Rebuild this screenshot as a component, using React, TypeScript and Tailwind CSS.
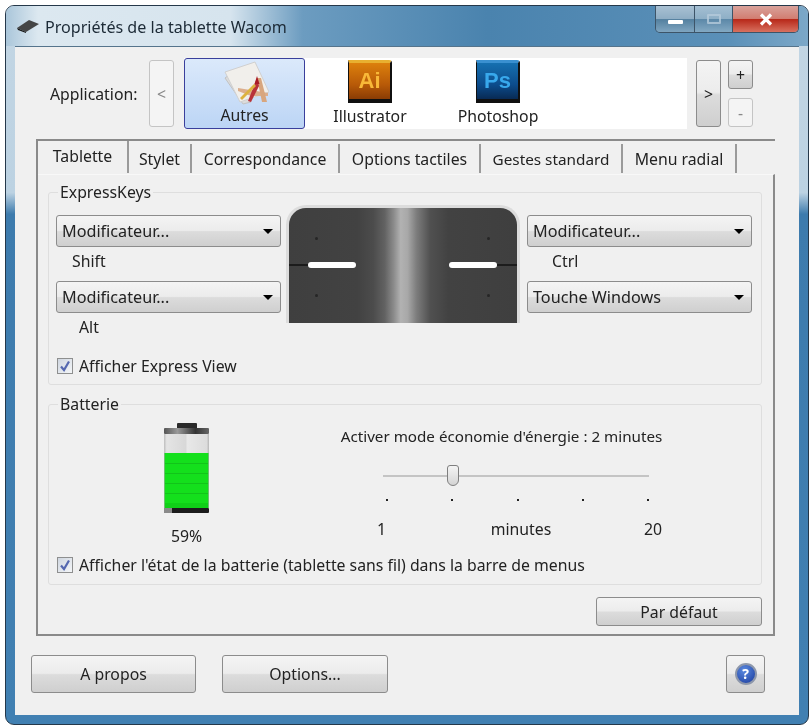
import React from 'react';

const btn =
  'flex items-center justify-center rounded-[3px] border border-[#8c8c8c] bg-[linear-gradient(#f4f4f4_0%,#ececec_48%,#dcdcdc_52%,#cfcfcf_100%)] text-[#222]';
const btnOff =
  'flex items-center justify-center rounded-[3px] border border-[#c4c4c4] bg-[#f4f4f4] text-[#888]';

function Dropdown({ label }: { label: string }) {
  return (
    <div className={`${btn} h-[32px] !justify-between pl-[5px] pr-[6px] text-[16.2px]`}>
      <span>{label}</span>
      <span className="mr-[1px] h-0 w-0 border-x-[5px] border-t-[5px] border-x-transparent border-t-black" />
    </div>
  );
}

function Check({ label }: { label: string }) {
  return (
    <div className="flex h-[16px] items-center gap-[6px] pl-[8px]">
      <div className="flex h-[16px] w-[16px] items-center justify-center border border-[#8e8f8f] bg-[linear-gradient(135deg,#cfd6e0,#f4f6f8)]">
        <svg viewBox="0 0 12 12" className="h-[12px] w-[12px]">
          <path d="M2 6.5 L5 10 L10 1.5" fill="none" stroke="#5568b0" strokeWidth="2.2" />
        </svg>
      </div>
      <span className="whitespace-nowrap">{label}</span>
    </div>
  );
}

function Tab({ label, width, active, size }: { label: string; width: number; active?: boolean; size?: string }) {
  return (
    <div
      style={{ width }}
      className={`flex items-center justify-center whitespace-nowrap border-r-2 border-[#9a9a9a] ${size ?? ''} ${active ? 'h-[32px] pb-[3px]' : 'mt-[3px] h-[29px] pt-[1px]'}`}
    >
      {label}
    </div>
  );
}

function TabletView() {
  return (
    <div className="relative mt-[3px] h-[118px] w-[234px] rounded-t-[20px] border-x-[3px] border-t-[3px] border-[#dcdcdc] bg-[linear-gradient(90deg,#3f3f3f_0%,#424242_30%,#4c4c4c_37%,#626262_42%,#8c8c8c_46%,#b2b2b2_49%,#a8a8a8_52%,#7c7c7c_56%,#505050_62%,#424242_70%,#3f3f3f_100%)]">
      <div className="absolute left-0 top-[56px] h-[2px] w-[20px] bg-[#1c1c1c]" />
      <div className="absolute right-0 top-[56px] h-[2px] w-[20px] bg-[#1c1c1c]" />
      <div className="absolute left-[19px] top-[54px] h-[6px] w-[48px] rounded-[3px] bg-white" />
      <div className="absolute right-[20px] top-[54px] h-[6px] w-[48px] rounded-[3px] bg-white" />
      <div className="absolute left-[26px] top-[29px] h-[3px] w-[3px] rounded-full bg-[#262626]" />
      <div className="absolute left-[26px] top-[86px] h-[3px] w-[3px] rounded-full bg-[#262626]" />
      <div className="absolute right-[27px] top-[29px] h-[3px] w-[3px] rounded-full bg-[#262626]" />
      <div className="absolute right-[27px] top-[86px] h-[3px] w-[3px] rounded-full bg-[#262626]" />
    </div>
  );
}

function Battery() {
  return (
    <svg viewBox="0 0 45 90" className="h-[90px] w-[45px]">
      <defs>
        <linearGradient id="glass" x1="0" x2="1" y1="0" y2="0">
          <stop offset="0" stopColor="#bdbdbd" />
          <stop offset="0.06" stopColor="#e4e4e4" />
          <stop offset="0.48" stopColor="#d8d8d8" />
          <stop offset="0.52" stopColor="#e8e8e8" />
          <stop offset="0.95" stopColor="#dcdcdc" />
          <stop offset="1" stopColor="#b5b5b5" />
        </linearGradient>
        <linearGradient id="rim" x1="0" x2="1" y1="0" y2="0">
          <stop offset="0" stopColor="#555" />
          <stop offset="0.3" stopColor="#999" />
          <stop offset="0.7" stopColor="#333" />
          <stop offset="1" stopColor="#666" />
        </linearGradient>
      </defs>
      <rect x="13" y="0" width="20" height="6" rx="1" fill="#2a2a2a" />
      <rect x="0" y="5" width="45" height="6" rx="1" fill="url(#rim)" />
      <rect x="0" y="11" width="45" height="19" fill="url(#glass)" />
      <rect x="0" y="30" width="45" height="55" fill="#14e01c" />
      <path d="M0 40.5H45M0 50.5H45M0 60.5H45M0 70.5H45" stroke="#12c41a" strokeWidth="1" />
      <rect x="0" y="80" width="45" height="5" fill="#10d018" />
      <rect x="0" y="30" width="1" height="55" fill="#6cc070" />
      <rect x="44" y="30" width="1" height="55" fill="#6cc070" />
      <rect x="0" y="85" width="45" height="5" rx="1" fill="#1c1c1c" />
      <rect x="0" y="85" width="8" height="5" fill="#8a8a8a" />
    </svg>
  );
}

function OthersIcon() {
  return (
    <svg viewBox="0 0 48 46" className="h-[46px] w-[48px]">
      <path d="M4 18 L22 44 L30 42 L12 12 Z" fill="#dcdcdc" stroke="#c2c2c2" />
      <path d="M4 12 L34 2 L48 32 L19 42 Z" fill="#f1efeb" stroke="#d0d0d0" />
      <path d="M17 28 L47 33 L47 36 L30 36 L17 31 Z" fill="#dcae8c" />
      <path d="M36 18 L40 18 L46 42 L41 42 Z" fill="#d8a67e" />
      <path d="M36 18 L38 26 L30 42 L27 41 Z" fill="#b8323a" />
      <path d="M19 38 L33 24 L35 26 L21 40 Z" fill="#dcb23e" />
      <path d="M36 16 L33.5 24 L38.5 24 Z" fill="#a81c26" />
    </svg>
  );
}

function AppItem({ label, width, code, box, text }: { label: string; width: number; code: string; box: string; text: string }) {
  return (
    <div style={{ width }} className="flex flex-col items-center pt-[2px]">
      <div className={`flex h-[43px] w-[44px] items-center justify-center rounded-tr-[3px] border-b-[4px] border-l border-r-[2px] border-t-[3px] border-[#101010] font-['Liberation_Sans',sans-serif] text-[22px] font-bold leading-none ${box} ${text}`}>
        {code}
      </div>
      <span className="mt-[3px] whitespace-nowrap leading-[20px]">{label}</span>
    </div>
  );
}

export default function App() {
  return (
    <div className="h-[728px] w-[812px] overflow-hidden bg-white pl-[5px] pt-[5px] font-['Noto_Sans',sans-serif] text-[15.8px] leading-[20px] text-[#222] blur-[0.4px]">
      <div className="h-[720px] w-[804px] rounded-[9px] border border-[#25384a] bg-[linear-gradient(#c3d6e4_0%,#bcd2e2_26%,#3d7bad_29%,#4180b2_100%)]">
        {/* title bar */}
        <div className="flex h-[40px] items-start justify-between rounded-t-[8px] bg-[linear-gradient(90deg,#aac6da_0%,#dce8f0_4%,#d6e4ee_28%,#6c9cc0_37%,#4a83ae_60%,#5b90b8_90%,#7ca8c8_100%)]">
          <div className="flex h-[40px] items-center pl-[11px] pt-[1px]">
            <svg viewBox="0 0 22 13" className="mr-[6px] h-[13px] w-[22px]">
              <path d="M0 8 L12 0 L22 4 L9 12 Z" fill="#454545" />
              <path d="M0 8 L9 12 L9 13 L1 10 Z" fill="#151515" />
            </svg>
            <span className="text-[16.1px] text-[#1c2a36]">Propriétés de la tablette Wacom</span>
          </div>
          <div className="mr-[9px] flex h-[27px] overflow-hidden rounded-b-[5px] border border-t-0 border-[#3d5468]">
            <div className="flex w-[39px] items-center justify-center border-r border-[#3d5468] bg-[linear-gradient(#a9c1d3_0%,#8fadc4_50%,#54809f_52%,#7fa5c0_100%)] pt-[5px]">
              <div className="h-[4px] w-[15px] rounded-[1px] bg-white" />
            </div>
            <div className="flex w-[38px] items-center justify-center border-r border-[#3d5468] bg-[linear-gradient(#a4bfd3_0%,#8eafc6_50%,#5c88a8_52%,#83a9c3_100%)]">
              <div className="h-[10px] w-[14px] rounded-[1px] border-2 border-[#b5cbdb] opacity-80" />
            </div>
            <div className="flex w-[65px] items-center justify-center bg-[linear-gradient(#d9a29b_0%,#d27e72_48%,#b8291a_52%,#d8715f_100%)]">
              <svg viewBox="0 0 14 13" className="h-[13px] w-[14px]">
                <path d="M2 1.5 L12 11.5 M12 1.5 L2 11.5" stroke="#fff" strokeWidth="3.2" />
              </svg>
            </div>
          </div>
        </div>

        {/* client area */}
        <div className="ml-[9px] h-[669px] w-[784px] border-t border-[#55748c] bg-[#f0f0f0]">
          <div className="mt-[11px] flex h-[71px] pl-[35px]">
            <div className="flex w-[99px] items-center">Application:</div>
            <div className={`${btnOff} mt-[2px] h-[67px] w-[25px]`}>&lt;</div>
            <div className="ml-[10px] flex h-[71px] w-[503px] bg-white">
              <div className="flex w-[121px] flex-col items-center rounded-[3px] border border-[#3a3f9c] bg-[linear-gradient(#dbe9fb,#bcd5f5)] pt-[1px]">
                <OthersIcon />
                <span className="mt-[-1px] leading-[20px]">Autres</span>
              </div>
              <AppItem label="Illustrator" width={130} code="Ai" box="bg-[linear-gradient(#dc800c,#b85a08_60%,#8a3c04)] border-t-[#e8b030]" text="text-[#f8b838]" />
              <AppItem label="Photoshop" width={126} code="Ps" box="bg-[linear-gradient(#1670b0,#0c4c8c_60%,#082a54)] border-t-[#3a90d0]" text="text-[#38a8ec]" />
            </div>
            <div className={`${btn} ml-[9px] mt-[2px] h-[67px] w-[25px]`}>&gt;</div>
            <div className="ml-[7px] mt-[2px] flex h-[67px] w-[25px] flex-col justify-between">
              <div className={`${btn} h-[29px]`}>+</div>
              <div className={`${btnOff} h-[29px]`}>-</div>
            </div>
          </div>

          {/* tab pane */}
          <div className="ml-[21px] mt-[10px] h-[497px] w-[739px] border-y-2 border-l-2 border-[#8a8a8a]">
            <div className="flex h-[33px] items-start">
              <Tab label="Tablette" width={91} active />
              <Tab label="Stylet" width={63} />
              <Tab label="Correspondance" width={148} />
              <Tab label="Options tactiles" width={141} />
              <Tab label="Gestes standard" width={142} size="text-[15.3px]" />
              <Tab label="Menu radial" width={114} />
            </div>
            <div className="h-[460px] border-r-2 border-t border-[#8a8a8a] border-t-[#f8f8f8] pl-[10px]">
              <fieldset className="mt-[7px] w-[714px] rounded-[3px] border border-[#dedede]">
                <legend className="ml-[9px] px-[2px] leading-[20px]">ExpressKeys</legend>
                <div className="flex">
                  <div className="ml-[7px] w-[225px] pt-[13px]">
                    <Dropdown label="Modificateur..." />
                    <div className="h-[34px] pl-[16px] pt-[4px]">Shift</div>
                    <Dropdown label="Modificateur..." />
                    <div className="h-[28px] pl-[23px] pt-[4px]">Alt</div>
                  </div>
                  <div className="ml-[5px]">
                    <TabletView />
                  </div>
                  <div className="ml-[7px] w-[225px] pt-[13px]">
                    <Dropdown label="Modificateur..." />
                    <div className="h-[34px] pl-[25px] pt-[4px]">Ctrl</div>
                    <Dropdown label="Touche Windows" />
                  </div>
                </div>
                <div className="pb-[10px] pt-[17px]">
                  <Check label="Afficher Express View" />
                </div>
              </fieldset>

              <fieldset className="mt-[9px] w-[714px] rounded-[3px] border border-[#dedede]">
                <legend className="ml-[9px] px-[2px] leading-[20px]">Batterie</legend>
                <div className="flex">
                  <div className="ml-[115px] mt-[9px] flex w-[45px] flex-col items-center">
                    <Battery />
                    <span className="mt-[13px] whitespace-nowrap">59%</span>
                  </div>
                  <div className="ml-[130px] w-[325px] pt-[12px]">
                    <div className="whitespace-nowrap text-center text-[15.2px]">Activer mode économie d'énergie : 2 minutes</div>
                    <div className="relative ml-[44px] mt-[19px] flex h-[21px] w-[266px] items-center">
                      <div className="h-[2px] w-full bg-[#c4c4c4]" />
                      <div className="absolute left-[64px] top-0 h-[21px] w-[12px] rounded-b-[6px] rounded-t-[3px] border border-[#7f7f7f] bg-[linear-gradient(#f4f4f4,#d4d4d4)]" />
                    </div>
                    <div className="ml-[47px] mt-[13px] flex w-[263px] justify-between">
                      <i className="h-[2px] w-[2px] bg-[#222]" />
                      <i className="h-[2px] w-[2px] bg-[#222]" />
                      <i className="h-[2px] w-[2px] bg-[#222]" />
                      <i className="h-[2px] w-[2px] bg-[#222]" />
                      <i className="h-[2px] w-[2px] bg-[#222]" />
                    </div>
                    <div className="ml-[38px] mt-[18px] flex w-[285px] justify-between">
                      <span>1</span>
                      <span className="ml-[12px]">minutes</span>
                      <span>20</span>
                    </div>
                  </div>
                </div>
                <div className="pb-[11px] pt-[11px]">
                  <Check label="Afficher l'état de la batterie (tablette sans fil) dans la barre de menus" />
                </div>
              </fieldset>

              <div className="mt-[12px] flex w-[714px] justify-end">
                <div className={`${btn} h-[29px] w-[166px]`}>Par défaut</div>
              </div>
            </div>
          </div>

          <div className="mt-[19px] flex pl-[16px]">
            <div className={`${btn} h-[38px] w-[165px]`}>A propos</div>
            <div className={`${btn} ml-[26px] h-[38px] w-[166px]`}>Options...</div>
            <div className={`${btn} ml-[338px] h-[38px] w-[39px]`}>
              <div className="flex h-[22px] w-[22px] items-center justify-center rounded-full border-[2px] border-[#8d97ab] bg-[radial-gradient(circle_at_40%_30%,#5a8ae0,#1a3a9c)] text-[14px] font-bold leading-none text-white">
                ?
              </div>
            </div>
          </div>
        </div>
      </div>
    </div>
  );
}
